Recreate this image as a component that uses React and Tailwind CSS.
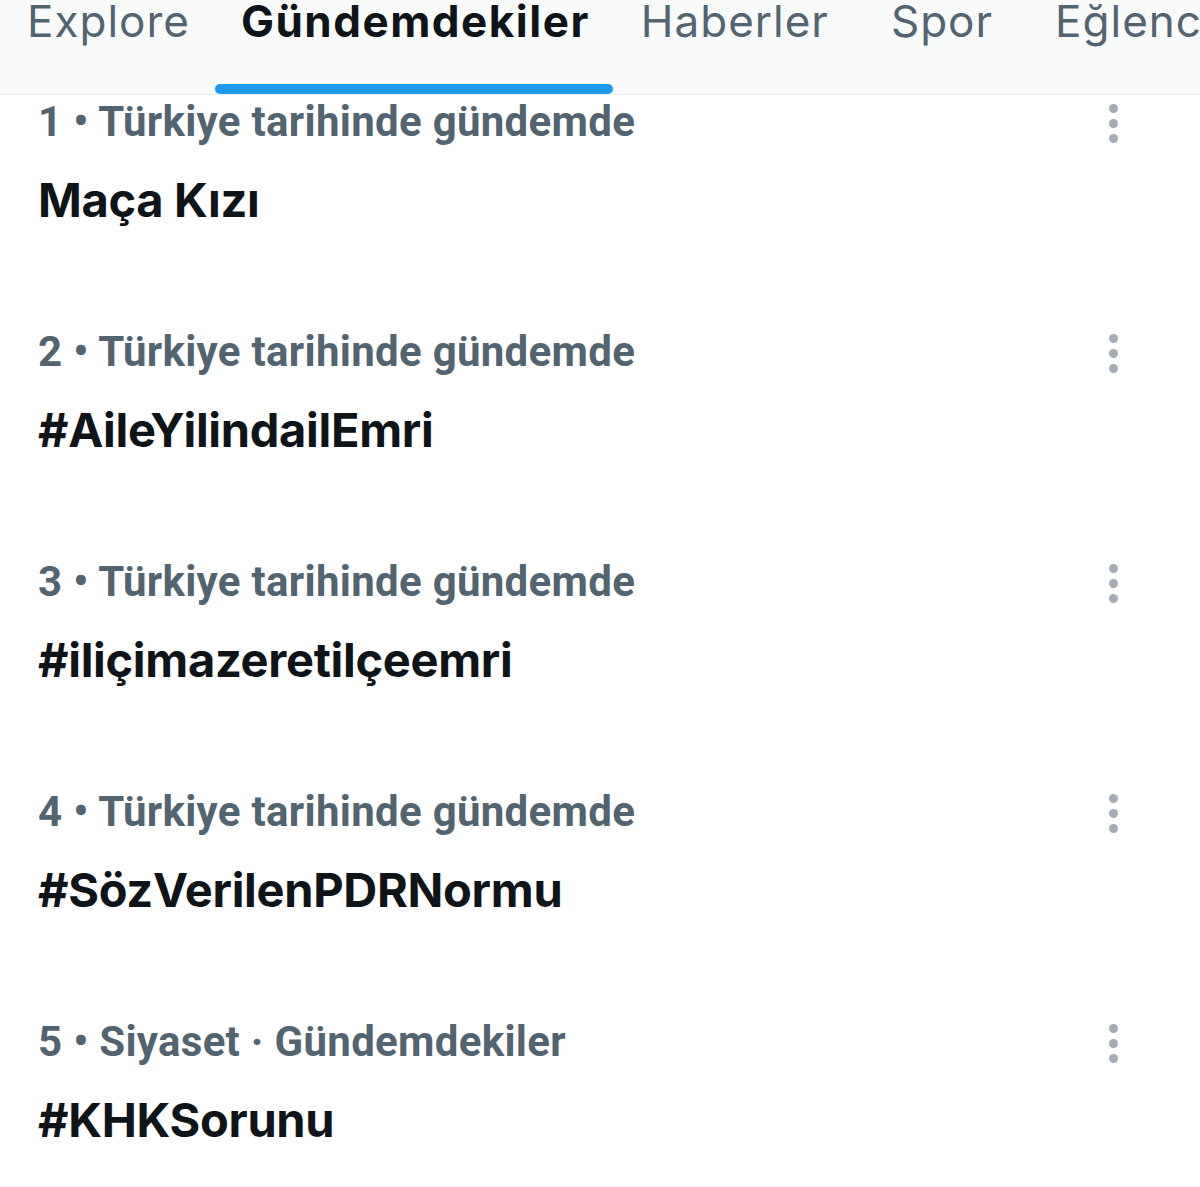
const tabs = [
  { label: 'Explore', active: false, pad: 'pl-[27px] pr-[25px]' },
  { label: 'Gündemdekiler', active: true, pad: 'pl-[26px] pr-[23px]' },
  { label: 'Haberler', active: false, pad: 'pl-[28px] pr-[31px]' },
  { label: 'Spor', active: false, pad: 'px-[31px]' },
  { label: 'Eğlence', active: false, pad: 'pl-[31px] pr-[26px]' },
];

const trends = [
  { meta: '1 • Türkiye tarihinde gündemde', title: 'Maça Kızı' },
  { meta: '2 • Türkiye tarihinde gündemde', title: '#AileYilindailEmri' },
  { meta: '3 • Türkiye tarihinde gündemde', title: '#iliçimazeretilçeemri' },
  { meta: '4 • Türkiye tarihinde gündemde', title: '#SözVerilenPDRNormu' },
  { meta: '5 • Siyaset · Gündemdekiler', title: '#KHKSorunu' },
];

function MoreDots() {
  return (
    <div className="flex flex-col items-center gap-[6px] pt-[9px]">
      <span className="block w-[9px] h-[9px] rounded-full bg-[#a4adb5]" />
      <span className="block w-[9px] h-[9px] rounded-full bg-[#a4adb5]" />
      <span className="block w-[9px] h-[9px] rounded-full bg-[#a4adb5]" />
    </div>
  );
}

function TrendRow({ meta, title }) {
  return (
    <div className="h-[230px] flex items-start justify-between pl-[38px] pr-[82px]">
      <div className="flex flex-col">
        <div className="font-['Roboto',sans-serif] text-[42px] leading-[54px] font-bold text-[#536471] tracking-[0.3px]">
          {meta}
        </div>
        <div className="mt-[21px] text-[47px] leading-[60px] font-bold text-[#0f1419] tracking-[-0.3px]">
          {title}
        </div>
      </div>
      <MoreDots />
    </div>
  );
}

export default function App() {
  return (
    <div
      className="w-[1200px] h-[1187px] overflow-hidden bg-white"
      style={{ fontFamily: 'Inter, Roboto, sans-serif' }}
    >
      <div className="h-[95px] bg-[#f9fafa] border-b border-[#eceff1] overflow-hidden">
        <div className="flex items-start whitespace-nowrap">
          {tabs.map((t) => (
            <div
              key={t.label}
              className={'relative h-[94px] flex flex-col items-center ' + t.pad}
            >
              <span
                className={
                  'text-[44px] leading-[44px] -mt-[1px] ' +
                  (t.active
                    ? 'font-bold text-[#0f1419] tracking-[1.5px]'
                    : 'font-normal text-[#536471] tracking-[1px]')
                }
              >
                {t.label}
              </span>
              {t.active && (
                <span className="absolute left-0 right-0 bottom-0 h-[10px] rounded-full bg-[#1d9bf0]" />
              )}
            </div>
          ))}
        </div>
      </div>
      <div className="flex flex-col">
        {trends.map((t) => (
          <TrendRow key={t.title} meta={t.meta} title={t.title} />
        ))}
      </div>
    </div>
  );
}
